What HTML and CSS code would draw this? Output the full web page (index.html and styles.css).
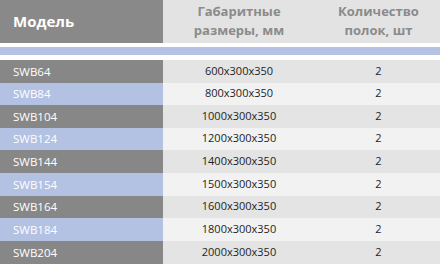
FILE: index.html
```html
<!DOCTYPE html>
<html>
<head>
<meta charset="utf-8">
<link rel="stylesheet" href="styles.css">
</head>
<body>
<div class="table">
  <div class="head">
    <div class="c1 h1">Модель</div>
    <div class="c2 h2">Габаритные<br>размеры, мм</div>
    <div class="c3 h2">Количество<br>полок, шт</div>
  </div>
  <div class="stripe"></div>
  <div class="rows">
    <div class="row g r23"><div class="c1">SWB64</div><div class="c2">600x300x350</div><div class="c3">2</div></div>
    <div class="row b r22"><div class="c1">SWB84</div><div class="c2">800x300x350</div><div class="c3">2</div></div>
    <div class="row g r23"><div class="c1">SWB104</div><div class="c2">1000x300x350</div><div class="c3">2</div></div>
    <div class="row b r22"><div class="c1">SWB124</div><div class="c2">1200x300x350</div><div class="c3">2</div></div>
    <div class="row g r23"><div class="c1">SWB144</div><div class="c2">1400x300x350</div><div class="c3">2</div></div>
    <div class="row b r23"><div class="c1">SWB154</div><div class="c2">1500x300x350</div><div class="c3">2</div></div>
    <div class="row g r22"><div class="c1">SWB164</div><div class="c2">1600x300x350</div><div class="c3">2</div></div>
    <div class="row b r23"><div class="c1">SWB184</div><div class="c2">1800x300x350</div><div class="c3">2</div></div>
    <div class="row g r23"><div class="c1">SWB204</div><div class="c2">2000x300x350</div><div class="c3">2</div></div>
  </div>
</div>
</body>
</html>
```
FILE: styles.css
```css
html, body {
  margin: 0;
  padding: 0;
  background: #ffffff;
}
body {
  width: 440px;
  height: 264px;
  overflow: hidden;
  font-family: "Open Sans", "Liberation Sans", sans-serif;
}
.table {
  display: flex;
  flex-direction: column;
}
.head {
  display: flex;
  height: 43px;
}
.c1 {
  width: 163px;
  flex: none;
  box-sizing: border-box;
  padding-left: 13px;
  display: flex;
  align-items: center;
}
.c2 {
  width: 152px;
  flex: none;
  display: flex;
  align-items: center;
  justify-content: center;
  text-align: center;
}
.c3 {
  flex: 1;
  display: flex;
  align-items: center;
  justify-content: center;
  text-align: center;
}
.head .c1 {
  background: #898989;
  color: #ffffff;
  font-weight: bold;
  font-size: 15px;
  padding-bottom: 2px;
}
.head .c2, .head .c3 {
  background: #e3e3e3;
  color: #8b8b8b;
  font-weight: bold;
  font-size: 13px;
  line-height: 19px;
  padding-bottom: 1px;
}
.head .c3 {
  padding-left: 2px;
}
.stripe {
  height: 8px;
  margin-top: 4px;
  margin-bottom: 5px;
  background: #b5c2e3;
}
.rows {
  display: flex;
  flex-direction: column;
}
.row {
  display: flex;
  font-size: 11px;
  color: #1e1e1e;
}
.r23 { height: 23px; }
.r22 { height: 22px; }
.row .c1 {
  color: #ffffff;
  font-size: 11.5px;
  padding-bottom: 1px;
}
.row .c2, .row .c3 {
  padding-bottom: 3px;
}
.row .c3 {
  padding-left: 2px;
}
.row.g .c1 { background: #878787; }
.row.b .c1 { background: #b3c1e2; }
.row.g .c2, .row.g .c3 { background: #e4e4e4; }
.row.b .c2, .row.b .c3 { background: #f2f2f2; }
```
